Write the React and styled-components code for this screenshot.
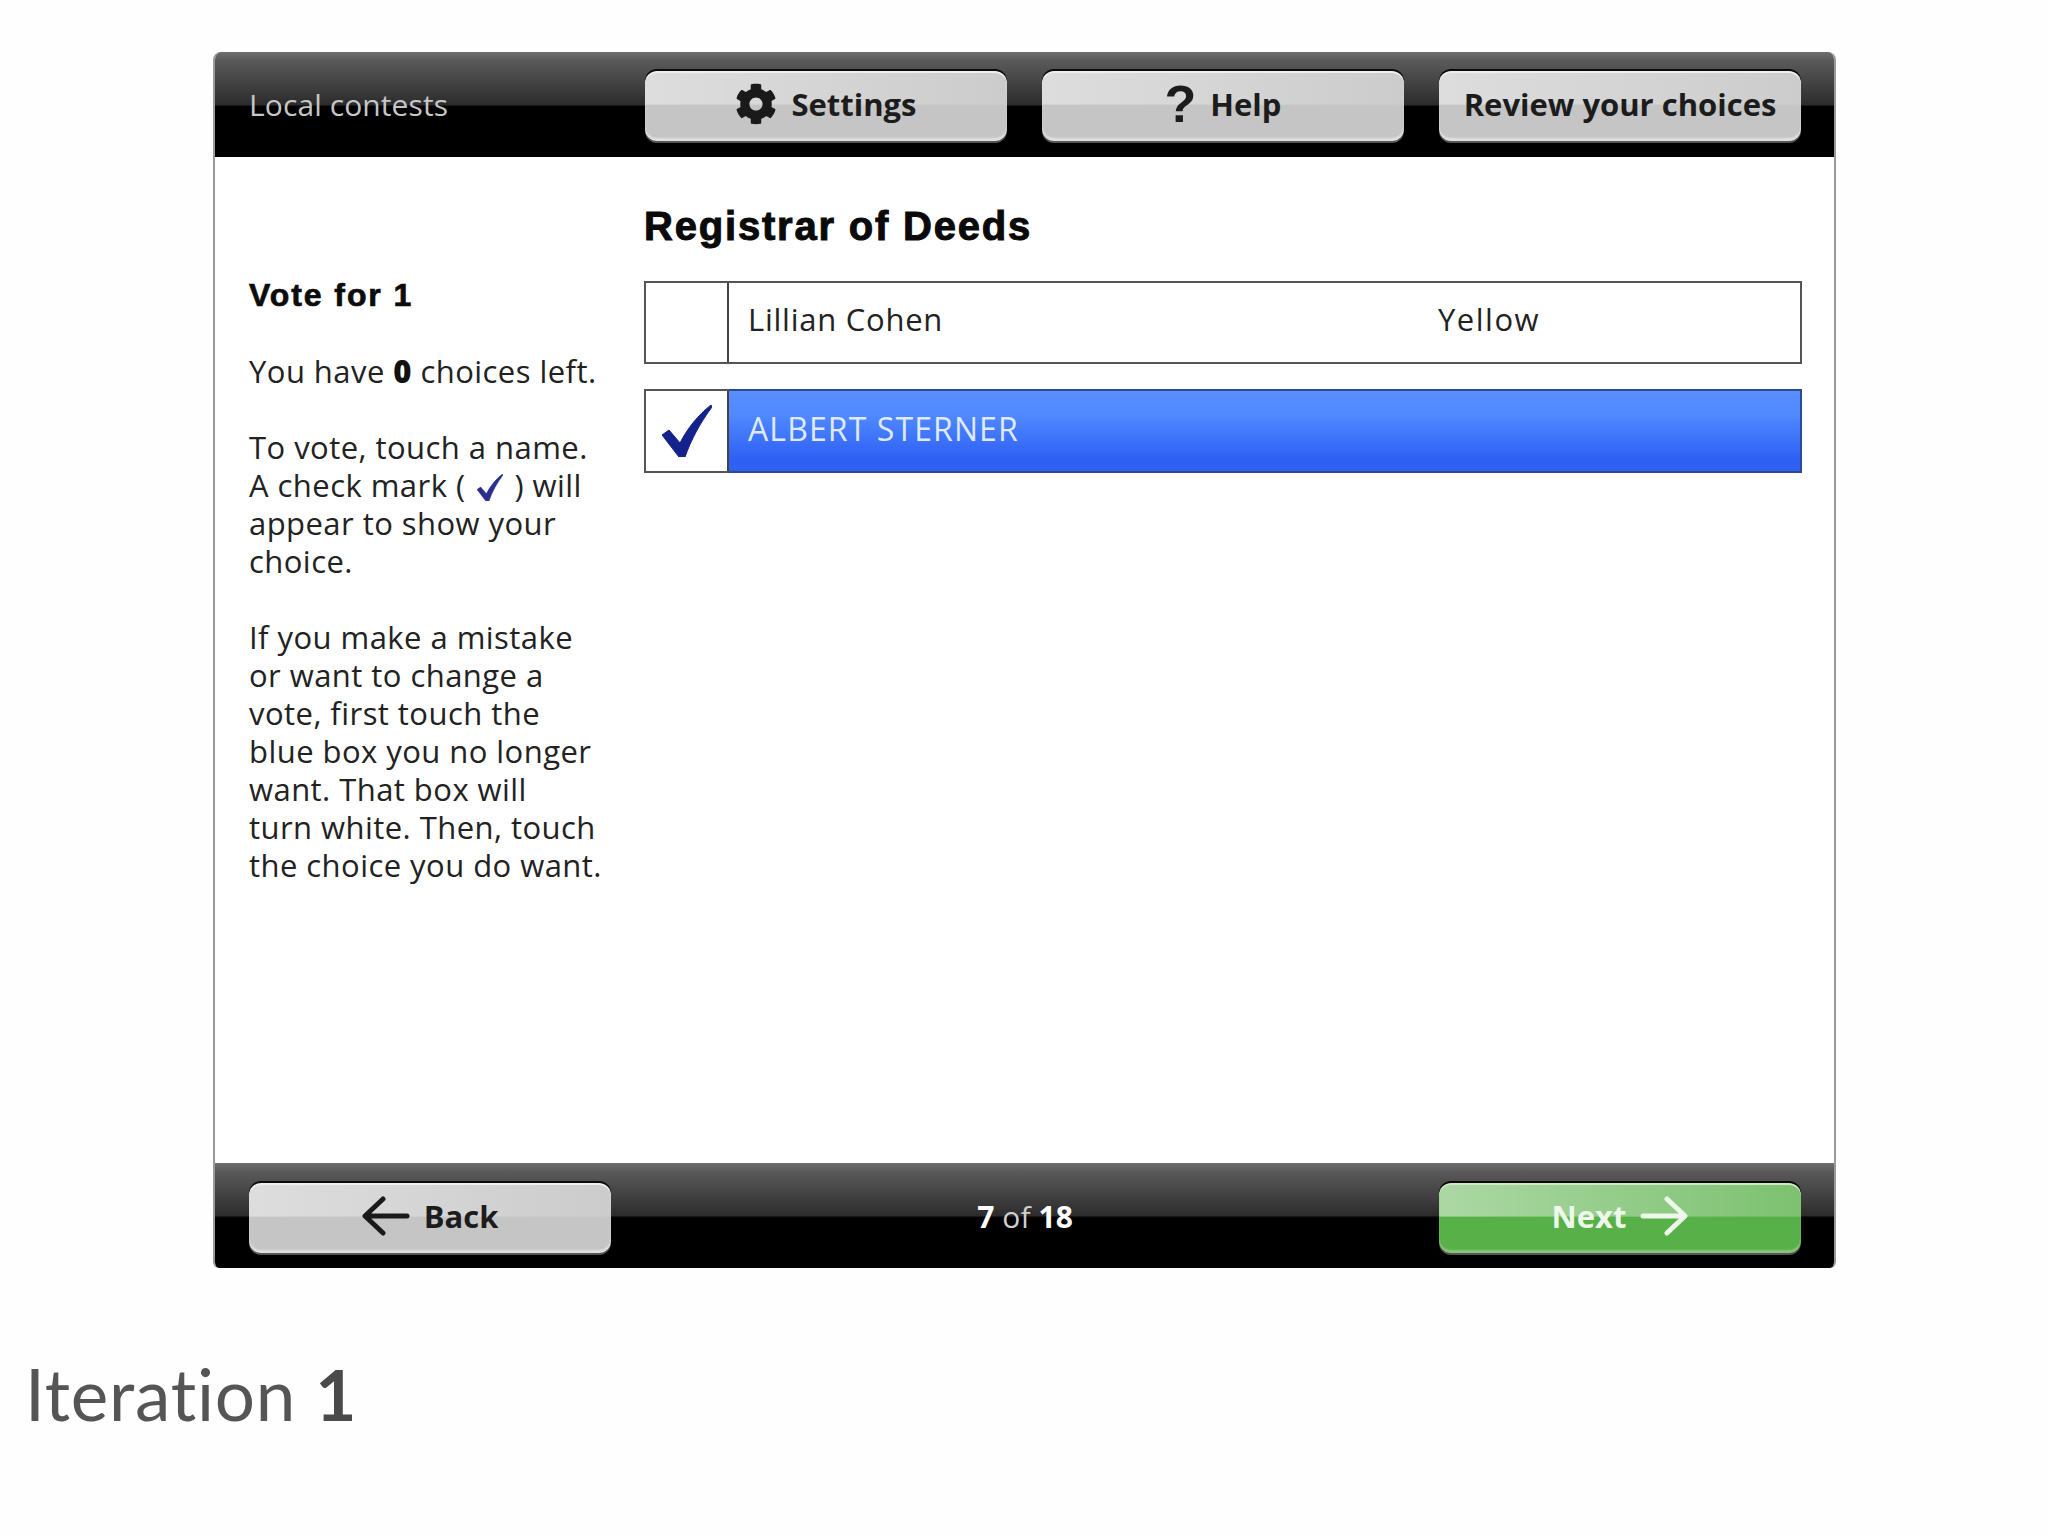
import React from "react";
import styled, { createGlobalStyle } from "styled-components";
import { FaCog } from "react-icons/fa";

const Global = createGlobalStyle`
  html, body { margin: 0; padding: 0; background: #fefefe; }
  #root { width: 2048px; height: 1536px; }
`;
const Page = styled.div`
  width: 2048px; height: 1536px; box-sizing: border-box; padding: 52px 0 0 25px;
  display: flex; flex-direction: column; background: #fefefe;
  font-family: "Open Sans", "Liberation Sans", sans-serif;
`;
const Frame = styled.div`
  width: 1623px; height: 1216px; margin-left: 188px; display: flex; flex-direction: column;
  box-sizing: border-box; background: #fff; border-left: 2px solid #9a9a9a; border-right: 2px solid #9a9a9a;
  border-radius: 8px 8px 6px 6px; overflow: hidden;
`;
const Bar = styled.div`
  height: 105px; flex: none; margin: 0 -2px; padding: ${p => p.$top ? "19px" : "20px"} 35px 0 36px; box-sizing: border-box;
  display: flex; gap: 35px; align-items: flex-start;
  background: linear-gradient(to bottom, #6e6e6e 0, #5a5a5a 8%, #2c2c2c 50%, #000 52%, #000 100%);
`;
const BarTitle = styled.div`
  width: 361px; flex: none; height: 66px; display: flex; align-items: center; color: #c6c6c6; font-size: 30px; letter-spacing: 0.1px;
  font-family: "Open Sans", sans-serif; font-weight: 400;
`;
const Counter = styled.div`
  flex: 1; height: 66px; display: flex; align-items: center; justify-content: center; color: #e8e8e8; font-size: 30px;
  font-family: "Open Sans", sans-serif; b { font-weight: 700; color: #fff; } span { margin: 0 8px; color: #cfcfcf; }
`;
const GlossButton = styled.div`
  width: 362px; height: 70px; flex: none; box-sizing: border-box; border-radius: 12px; display: flex; align-items: center; justify-content: center; gap: 14px; padding-bottom: 4px;
  font-family: "Open Sans", sans-serif; font-weight: 700; font-size: 31px;
  color: ${p => p.$green ? "#eef8ea" : "#1c1c1c"};
  background:
    linear-gradient(to right, ${p => p.$green ? "rgba(255,255,255,.5), rgba(255,255,255,.22)" : "rgba(255,255,255,.42), rgba(255,255,255,.12)"}) top / 100% 48% no-repeat,
    ${p => p.$green ? "#58b048" : "#c5c5c5"};
  box-shadow: 0 -2px 0 #0a0a0a, inset 0 2px 0 ${p => p.$green ? "#cfe8c6" : "#efefef"}, inset 0 -3px 2px ${p => p.$green ? "#8cc47f" : "#e0e0e0"}, 0 2px 0 #555;
`;
const Question = styled.span`
  font-family: "Liberation Sans", sans-serif; font-weight: 700; font-size: 52px; line-height: 1;
`;
const Main = styled.div`
  flex: 1; display: flex; min-height: 0; padding: 0 32px 0 34px; gap: 0;
`;
const Side = styled.div`
  width: 395px; flex: none; box-sizing: border-box; padding-top: 119px; color: #222; font-size: 31px; line-height: 38px;
  font-family: "Open Sans", sans-serif; letter-spacing: 0.45px;
`;
const SideHead = styled.div`
  font-family: "Liberation Sans", sans-serif; font-weight: 700; font-size: 32px; letter-spacing: 1.9px; color: #0c0c0c; margin-bottom: 38px; -webkit-text-stroke: .7px #0c0c0c;
`;
const Para = styled.p`
  margin: 0 0 38px; white-space: nowrap; b { font-weight: 800; color: #111; }
  svg { vertical-align: -4px; margin: 0 3px; }
`;
const Content = styled.div`
  flex: 1; display: flex; flex-direction: column; min-width: 0;
`;
const Title = styled.h1`
  margin: 46px 0 0; font-family: "Liberation Sans", sans-serif; font-weight: 700; font-size: 40px; line-height: 46px; color: #0a0a0a; letter-spacing: 1.8px; -webkit-text-stroke: 1px #0a0a0a;
`;
const Row = styled.div`
  height: ${p => p.$selected ? 84 : 83}px; margin-top: ${p => p.$selected ? 25 : 32}px; box-sizing: border-box; display: flex; border: 2px solid #555; background: #fff;
`;
const Box = styled.div`
  width: 83px; flex: none; display: flex; align-items: center; justify-content: center; box-sizing: border-box;
  border-right: 2px solid #444;
`;
const Cell = styled.div`
  flex: 1; display: flex; align-items: center; padding-left: 19px; padding-bottom: ${p => p.$selected ? 6 : 7}px;
  font-size: ${p => p.$selected ? 32 : 31}px;
  letter-spacing: ${p => p.$selected ? "1.1px" : "0.75px"};
  color: ${p => p.$selected ? "#dfe9ff" : "#222"};
  background: ${p => p.$selected ? "linear-gradient(to bottom, #5a8eff 0, #5089ff 30%, #2e60f4 85%, #3060f0 100%)" : "#fff"};
  font-family: "Open Sans", sans-serif;
  ${p => p.$selected && "margin: -2px -2px -2px 0; border: 2px solid #2b4a94; border-left: 0;"}
`;
const Name = styled.span`
  width: 690px; flex: none;
`;
const Party = styled.span`
  letter-spacing: 1.5px;
`;
const Caption = styled.div`
  margin-top: 84px; font-family: Lato, sans-serif; font-size: 71px; color: #555; line-height: 84px; letter-spacing: .8px;
  b { font-weight: 700; color: #4a4a4a; margin-left: 0; }
`;

const Check = ({ w, h, c = "#14238c" }) => (
  <svg width={w} height={h} viewBox="0 0 50 52">
    <path d="M0 30 L7 25 L18 38 C25 24 36 10 49 0 L50 2 C38 18 29 35 23 52 L17 52 Z" fill={c} stroke={c} strokeWidth="1" strokeLinejoin="round" />
  </svg>
);
const ArrowLeft = () => (
  <svg width="48" height="40" viewBox="0 0 48 40" fill="none" stroke="#1a1a1a" strokeWidth="5" strokeLinecap="round" strokeLinejoin="round">
    <path d="M45 20 H4 M21 3 L3 20 L21 37" />
  </svg>
);
const ArrowRight = () => (
  <svg width="48" height="40" viewBox="0 0 48 40" fill="none" stroke="#eef8ea" strokeWidth="5" strokeLinecap="round" strokeLinejoin="round">
    <path d="M3 20 H44 M27 3 L45 20 L27 37" />
  </svg>
);

export default function App() {
  return (
    <Page>
      <Global />
      <Frame>
        <Bar $top>
          <BarTitle>Local contests</BarTitle>
          <GlossButton><FaCog size={42} color="#1a1a1a" />Settings</GlossButton>
          <GlossButton><Question>?</Question>Help</GlossButton>
          <GlossButton>Review your choices</GlossButton>
        </Bar>
        <Main>
          <Side>
            <SideHead>Vote for 1</SideHead>
            <Para>You have <b>0</b> choices left.</Para>
            <Para>To vote, touch a name.<br />A check mark ( <Check w={26} h={27} c="#2a2f8c" /> ) will<br />appear to show your<br />choice.</Para>
            <Para>If you make a mistake<br />or want to change a<br />vote, first touch the<br />blue box you no longer<br />want. That box will<br />turn white. Then, touch<br />the choice you do want.</Para>
          </Side>
          <Content>
            <Title>Registrar of Deeds</Title>
            <Row>
              <Box />
              <Cell><Name>Lillian Cohen</Name><Party>Yellow</Party></Cell>
            </Row>
            <Row $selected>
              <Box><Check w={50} h={52} /></Box>
              <Cell $selected>ALBERT STERNER</Cell>
            </Row>
          </Content>
        </Main>
        <Bar>
          <GlossButton><ArrowLeft />Back</GlossButton>
          <Counter><b>7</b><span>of</span><b>18</b></Counter>
          <GlossButton $green>Next<ArrowRight /></GlossButton>
        </Bar>
      </Frame>
      <Caption>Iteration <b>1</b></Caption>
    </Page>
  );
}
